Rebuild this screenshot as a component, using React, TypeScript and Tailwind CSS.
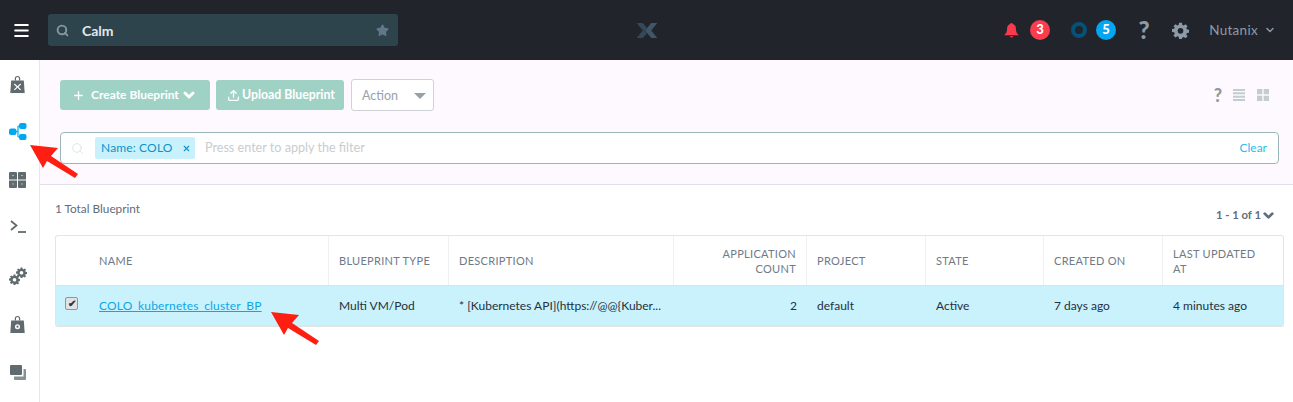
import { FC, ReactNode } from "react";
import { ChevronDown, Plus, Upload, Search, Menu, Star, X } from "lucide-react";

const FONT = "font-['Lato','Open_Sans',sans-serif]";

const Gear: FC<{ className?: string }> = ({ className }) => (
  <svg viewBox="0 0 24 24" className={className} fill="currentColor">
    <path
      fillRule="evenodd"
      d="M10 1h4l.6 3.1 1.900.8L19.100 3 22 5.900l-1.900 2.600.8 1.900L24 11v4l-3.100.6-.8 1.900 1.900 2.600-2.900 2.900-2.600-1.900-1.900.8L14 24h-4l-.6-3.100-1.900-.8L4.900 22 2 19.100l1.900-2.600-.8-1.900L0 14v-4l3.100-.6.8-1.900L2 5.900 4.900 3l2.600 1.900 1.900-.8L10 1zm2 7.500a4 4 0 1 0 0 8 4 4 0 0 0 0-8z"
    />
  </svg>
);

const SideIcon: FC<{ children: ReactNode }> = ({ children }) => (
  <div className="flex h-[48px] w-full items-center justify-center text-[#5f6b6f]">
    {children}
  </div>
);

const Sidebar: FC = () => (
  <aside className="flex w-10 shrink-0 flex-col border-r border-[#e6e8ec] bg-white pr-[4px]">
    <SideIcon>
      <svg viewBox="0 0 16 20" className="h-[18px] w-[15px]" fill="currentColor">
        <path d="M5 6V4a3 3 0 0 1 6 0v2h-1.300V4a1.700 1.700 0 0 0-3.400 0v2z" />
        <path d="M1 6h14l1 14H0z" />
        <path d="M4.500 10l7 6.500M11.500 10l-7 6.500" stroke="#fff" strokeWidth="1.300" />
      </svg>
    </SideIcon>
    <SideIcon>
      <svg viewBox="0 0 18 17" className="mb-[2px] h-[17px] w-[18px]" fill="#00a8f0">
        <rect x="0" y="5.500" width="7.500" height="6.500" rx="2" />
        <rect x="10" y="0" width="7.500" height="6" rx="2" />
        <rect x="10" y="11" width="7.500" height="6" rx="2" />
        <path d="M6 8.500h3M9 3v11M9 3h2M9 14h2" stroke="#00a8f0" strokeWidth="1.200" fill="none" />
      </svg>
    </SideIcon>
    <SideIcon>
      <svg viewBox="0 0 17 16" className="h-[16px] w-[17px]" fill="currentColor">
        <path d="M1 0h6a1 1 0 0 1 1 1v6.500H0V1a1 1 0 0 1 1-1z" />
        <path d="M10 0h6a1 1 0 0 1 1 1v6.500H9V1a1 1 0 0 1 1-1z" />
        <path d="M0 8.500h8V15a1 1 0 0 1-1 1H1a1 1 0 0 1-1-1z" />
        <path d="M9 8.500h8V15a1 1 0 0 1-1 1h-6a1 1 0 0 1-1-1z" />
        <path d="M3 3.500h2M12 3.500h2M3 12h2M12 12h2" stroke="#fff" strokeWidth="1" opacity=".5" />
      </svg>
    </SideIcon>
    <SideIcon>
      <svg viewBox="0 0 16 13" className="mb-[3px] h-[13px] w-[16px]" fill="none" stroke="currentColor" strokeWidth="1.800">
        <path d="M1 1l5.500 4.500L1 10" />
        <path d="M8 12h8" />
      </svg>
    </SideIcon>
    <SideIcon>
      <div className="relative h-[18px] w-[18px]">
        <Gear className="absolute bottom-0 left-0 h-[11px] w-[11px]" />
        <Gear className="absolute top-0 right-0 h-[11px] w-[11px]" />
      </div>
    </SideIcon>
    <SideIcon>
      <svg viewBox="0 0 16 20" className="h-[18px] w-[15px]" fill="currentColor">
        <path d="M5 6V4a3 3 0 0 1 6 0v2h-1.300V4a1.700 1.700 0 0 0-3.400 0v2z" />
        <path d="M1 6h14l1 14H0z" />
        <circle cx="8" cy="13" r="2.800" fill="#fff" />
        <circle cx="8" cy="13" r="1.200" />
      </svg>
    </SideIcon>
    <SideIcon>
      <svg viewBox="0 0 16 15" className="h-[15px] w-[16px]" fill="currentColor">
        <rect x="0" y="0" width="12" height="10" rx="1" />
        <path d="M13.500 4H15a1 1 0 0 1 1 1v9a1 1 0 0 1-1 1H5a1 1 0 0 1-1-1v-2.500h9.500z" opacity=".75" />
      </svg>
    </SideIcon>
  </aside>
);

const TopBar: FC = () => (
  <header className="flex h-[60px] shrink-0 items-center bg-[#21252b]">
    <Menu className="ml-[12px] h-[19px] w-[19px] text-white" strokeWidth={2.500} />
    <div className="ml-[17px] flex h-[32px] w-[350px] items-center rounded-[3px] bg-[#2e444d] px-[8px]">
      <Search className="h-[13px] w-[13px] text-[#8a969b]" strokeWidth={3.500} />
      <span className="ml-[13px] flex-1 text-[14px] font-bold text-[#e4e8ea]">Calm</span>
      <Star className="mr-[1px] h-[13px] w-[13px] fill-[#62788a] text-[#62788a]" />
    </div>
    <div className="flex flex-1 justify-start pl-[238px]">
      <svg viewBox="0 0 22 16" className="h-[15px] w-[22px]" fill="#354857">
        <path d="M0 0h6.500L11 5 9 8 6.500 8z" />
        <path d="M0 16h6.500L11 11 9 8H6.500z" />
        <path d="M22 0h-6.500L9 8l6.500 8H22l-6.500-8z" fill="#3f5668" />
      </svg>
    </div>
    <div className="flex items-center pr-[17px]">
      <svg viewBox="0 0 18 18" className="h-[16px] w-[17px]" fill="#f9394c">
        <path d="M9 1a1.500 1.500 0 0 1 1.500 1.200C13 3 14 5 14 8c0 3 1 5 3 6.500V15H1v-.5C3 13 4 11 4 8c0-3 1-5 3.500-5.800A1.500 1.500 0 0 1 9 1z" />
        <path d="M7 16h4a2 1.500 0 0 1-4 0z" />
      </svg>
      <span className="ml-[10px] flex h-[20px] w-[20px] items-center justify-center rounded-full bg-[#fb3c4e] text-[13px] font-black text-white">
        3
      </span>
      <span className="ml-[21px] h-[16px] w-[16px] rounded-full border-[4px] border-[#04527a]" />
      <span className="ml-[9px] flex h-[20px] w-[20px] items-center justify-center rounded-full bg-[#03a6f0] text-[13px] font-black text-white">
        5
      </span>
      <span className="ml-[22px] w-[12px] text-center text-[24px] leading-none font-black text-[#8d9aa7]">?</span>
      <Gear className="ml-[22px] h-[17px] w-[17px] text-[#8d9aa7]" />
      <span className="ml-[20px] text-[13.500px] tracking-[0.3px] text-[#8d9aa7]">Nutanix</span>
      <ChevronDown className="ml-[6px] h-[12px] w-[12px] text-[#8d9aa7]" strokeWidth={3} />
    </div>
  </header>
);

const Toolbar: FC = () => (
  <div className="h-[125px] shrink-0 border-b border-[#e0e1e8] bg-[#fdf9fe] px-[14px] pt-[19px] pl-[20px]">
    <div className="flex items-center">
      <button className="flex h-[30px] w-[150px] items-center rounded-[3px] bg-[#9fd2c5] pl-[12px] text-[12px] font-bold text-white">
        <Plus className="h-[13px] w-[13px]" strokeWidth={2.500} />
        <span className="ml-[6px]">Create Blueprint</span>
        <ChevronDown className="ml-[2px] h-[16px] w-[16px]" strokeWidth={4.500} />
      </button>
      <button className="ml-[6px] flex h-[30px] w-[128px] items-center rounded-[3px] bg-[#9fd2c5] pl-[11px] text-[12.300px] font-bold text-white">
        <Upload className="h-[13px] w-[13px]" strokeWidth={2.500} />
        <span className="ml-[2px]">Upload Blueprint</span>
      </button>
      <div className="ml-[7px] flex h-[32px] w-[83px] items-center justify-between rounded-[3px] border border-[#cfd2d6] bg-white pt-[2px] pr-[7px] pl-[10px] text-[12.500px] text-[#9aa1ac]">
        Action
        <span className="h-0 w-0 border-x-[6px] border-t-[6px] border-x-transparent border-t-[#97a1a8]" />
      </div>
      <div className="ml-auto flex items-center pr-[10px] text-[#c3ccd0]">
        <span className="text-[18px] leading-none font-black text-[#8d9aa0]">?</span>
        <svg viewBox="0 0 12 12" className="ml-[11px] h-[12px] w-[12px]" fill="currentColor">
          <path d="M0 0h12v2H0zM0 3.300h12v2H0zM0 6.700h12v2H0zM0 10h12v2H0z" />
        </svg>
        <svg viewBox="0 0 12 12" className="ml-[12px] h-[12px] w-[12px]" fill="currentColor">
          <path d="M0 0h5.300v5.300H0zM6.700 0H12v5.300H6.700zM0 6.700h5.300V12H0zM6.700 6.700H12V12H6.700z" />
        </svg>
      </div>
    </div>
    <div className="mt-[21px] flex h-[32px] items-center rounded-[4px] border border-[#9cb5ba] bg-white pr-[11px] pl-[10px]">
      <Search className="h-[13px] w-[13px] text-[#d3e0e4]" strokeWidth={1.500} />
      <span className="ml-[11px] flex h-[22px] w-[100px] items-center rounded-[2px] bg-[#c9f1fc] pl-[6px] text-[12px] tracking-[0.15px] text-[#0b93c9]">
        Name: COLO
        <X className="ml-[9px] h-[9px] w-[9px]" strokeWidth={3} />
      </span>
      <span className="ml-[10px] flex-1 text-[12.600px] text-[#c8ccd2]">
        Press enter to apply the filter
      </span>
      <span className="text-[12px] text-[#30b9f0]">Clear</span>
    </div>
  </div>
);

const COLUMNS = "grid-cols-[43px_230px_120px_225px_133px_119px_118px_119px_1fr]";

const Th: FC<{ children?: ReactNode; right?: boolean; className?: string }> = ({
  children,
  right,
  className,
}) => (
  <div
    className={`flex items-center border-r border-[#eff0f2] px-[10px] text-[11px] leading-[15px] tracking-[0.3px] text-[#6f7a86] last:border-r-0 ${right ? "justify-end text-right" : ""} ${className ?? ""}`}
  >
    <span>{children}</span>
  </div>
);

const Td: FC<{ children?: ReactNode; right?: boolean; className?: string }> = ({
  children,
  right,
  className,
}) => (
  <div
    className={`flex items-center overflow-hidden px-[10px] text-[12px] whitespace-nowrap text-[#26303c] ${right ? "justify-end" : ""} ${className ?? ""}`}
  >
    {children}
  </div>
);

const BlueprintTable: FC = () => (
  <div className="ml-[15px] w-[1229px] overflow-hidden rounded-[3px] border border-b-2 border-[#e2e4e6] bg-white">
    <div className={`grid h-[50px] ${COLUMNS} border-b border-[#dfe2e4]`}>
      <Th className="border-r-0" />
      <Th className="pl-0">NAME</Th>
      <Th>BLUEPRINT TYPE</Th>
      <Th>DESCRIPTION</Th>
      <Th right>APPLICATION COUNT</Th>
      <Th>PROJECT</Th>
      <Th>STATE</Th>
      <Th>CREATED ON</Th>
      <Th className="pr-[20px]">LAST UPDATED AT</Th>
    </div>
    <div className={`grid h-[39px] ${COLUMNS} bg-[#c9f2fc]`}>
      <div className="flex items-center pb-[5px] pl-[9px]">
        <span className="flex h-[13px] w-[13px] items-center justify-center rounded-[2px] border border-[#8f9598] bg-[#e2e2e2] text-[10px] leading-none font-black text-[#333]">
          ✔
        </span>
      </div>
      <Td className="pl-0">
        <span className="tracking-[0.15px] text-[#0fa6e8] underline">COLO_kubernetes_cluster_BP</span>
      </Td>
      <Td>Multi VM/Pod</Td>
      <Td>* [Kubernetes API](https://@@{"{"}Kuber...</Td>
      <Td right>2</Td>
      <Td>default</Td>
      <Td>Active</Td>
      <Td>7 days ago</Td>
      <Td>4 minutes ago</Td>
    </div>
  </div>
);

// red call-out arrows laid over the page
const Arrow: FC<{ className: string }> = ({ className }) => (
  <svg viewBox="0 0 48 34" className={`absolute h-[34px] w-[48px] ${className}`}>
    <path d="M0 0L28 3 21 11 48 29 45 33 17 16 13 23z" fill="#fe1f12" />
  </svg>
);

const App: FC = () => (
  <div className={`relative flex h-[402px] w-[1293px] flex-col overflow-hidden bg-white ${FONT}`}>
    <TopBar />
    <div className="flex flex-1">
      <Sidebar />
      <main className="flex-1">
        <Toolbar />
        <div className="flex items-start justify-between pt-[16px] pr-[17px] pl-[15px] leading-[16px] text-[#5f6e7a]">
          <span className="text-[11.800px]">1 Total Blueprint</span>
          <span className="mt-[6px] flex items-center text-[11.300px] font-bold">
            1 - 1 of 1
            <ChevronDown className="h-[15px] w-[15px]" strokeWidth={4.500} />
          </span>
        </div>
        <div className="mt-[12px]">
          <BlueprintTable />
        </div>
      </main>
    </div>
    <Arrow className="top-[145px] left-[30px]" />
    <Arrow className="top-[312px] left-[271px]" />
  </div>
);

export default App;
